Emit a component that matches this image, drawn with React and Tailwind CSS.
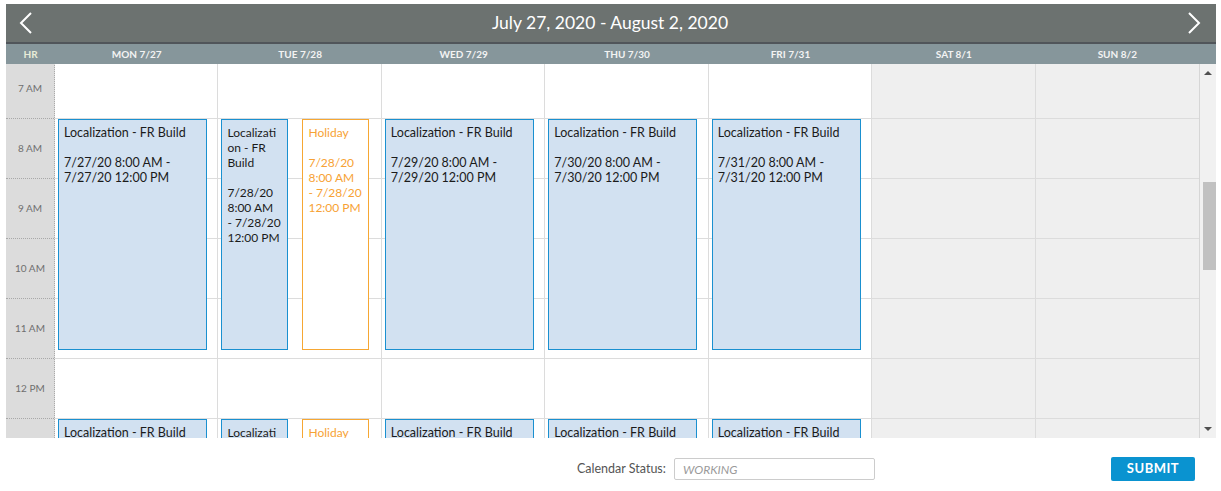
import React from 'react';

const hours = ['7 AM', '8 AM', '9 AM', '10 AM', '11 AM', '12 PM', '1 PM'];

const days = [
  { label: 'MON 7/27', date: '7/27/20', weekend: false },
  { label: 'TUE 7/28', date: '7/28/20', weekend: false, holiday: true },
  { label: 'WED 7/29', date: '7/29/20', weekend: false },
  { label: 'THU 7/30', date: '7/30/20', weekend: false },
  { label: 'FRI 7/31', date: '7/31/20', weekend: false },
  { label: 'SAT 8/1', weekend: true },
  { label: 'SUN 8/2', weekend: true },
];

const blocks = [
  { top: 'top-[61px]', start: '8:00 AM', end: '12:00 PM' },
  { top: 'top-[361px]', start: '1:00 PM', end: '5:00 PM' },
];

function Chevron({ dir }) {
  return (
    <svg width="16" height="24" viewBox="0 0 16 24" fill="none">
      <path
        d={dir === 'left' ? 'M13 2 L3 12 L13 22' : 'M3 2 L13 12 L3 22'}
        stroke="white"
        strokeWidth="2"
      />
    </svg>
  );
}

function Range({ block, date, narrow }) {
  if (narrow) {
    return (
      <div>
        {date} {block.start} <span className="whitespace-nowrap">- {date}</span> {block.end}
      </div>
    );
  }
  return (
    <div>
      {date} {block.start} - {date} {block.end}
    </div>
  );
}

function WorkEvent({ block, date, narrow }) {
  return (
    <div
      className={`absolute ${block.top} left-[3px] ${narrow ? 'w-[67px] text-[12px]' : 'w-[149px] text-[12.5px]'} h-[231px] bg-[#d2e1f1] border border-[#1a90d0] px-[5px] pt-[5px] leading-[15px] text-[#1b1b1b] break-words`}
    >
      <div>Localization - FR Build</div>
      <div className="h-[15px]" />
      <Range block={block} date={date} narrow={narrow} />
    </div>
  );
}

function HolidayEvent({ block, date }) {
  return (
    <div
      className={`absolute ${block.top} left-[84px] w-[67px] h-[231px] bg-white border border-[#f6a733] px-[5px] pt-[5px] text-[12px] leading-[15px] text-[#f7a234] break-words`}
    >
      <div>Holiday</div>
      <div className="h-[15px]" />
      <Range block={block} date={date} narrow />
    </div>
  );
}

export default function App() {
  return (
    <div className="bg-white w-[1221px] h-[491px] px-[6px] pt-[4px] font-['Lato','Liberation_Sans',sans-serif]">
      <div className="w-[1210px]">
        {/* title bar */}
        <div className="h-[40px] bg-[#6c7270] flex items-center justify-between pl-[12px] pr-[14px] border-b-2 border-[#50555a]">
          <Chevron dir="left" />
          <div className="text-white text-[17.5px] leading-none">July 27, 2020 - August 2, 2020</div>
          <Chevron dir="right" />
        </div>

        {/* day headers */}
        <div className="h-[20px] bg-[#86969b] flex text-[10px] font-bold text-[#f3f3f3]">
          <div className="grid grid-cols-[49px_repeat(7,1fr)] w-[1193px] items-center">
            <div className="text-center text-[#e8ecd8]">HR</div>
            {days.map((d) => (
              <div key={d.label} className="text-center">{d.label}</div>
            ))}
          </div>
        </div>

        {/* body */}
        <div className="flex h-[374px] overflow-hidden">
          <div className="w-[1193px] overflow-hidden">
            <div className="grid grid-cols-[49px_repeat(7,1fr)] -mt-[6px]">
              <div className="bg-[#dcdcdc] border-r border-dotted border-[#a9a9a9]">
                {hours.map((h, i) => (
                  <div
                    key={h}
                    className={`h-[60px] flex items-center justify-center text-[10px] text-[#6f6f6f] ${i > 0 ? 'border-t border-dotted border-[#a9a9a9]' : ''}`}
                  >
                    {h}
                  </div>
                ))}
              </div>
              {days.map((d, di) => (
                <div
                  key={d.label}
                  className={`relative ${d.weekend ? 'bg-[#efefef]' : 'bg-white'} ${di < 6 ? 'border-r border-[#dcdcdc]' : ''}`}
                >
                  {hours.map((h, i) => (
                    <div key={h} className={`h-[60px] ${i > 0 ? 'border-t border-[#dcdcdc]' : ''}`} />
                  ))}
                  {!d.weekend &&
                    blocks.map((b) => (
                      <React.Fragment key={b.top}>
                        <WorkEvent block={b} date={d.date} narrow={d.holiday} />
                        {d.holiday && <HolidayEvent block={b} date={d.date} />}
                      </React.Fragment>
                    ))}
                </div>
              ))}
            </div>
          </div>

          {/* scrollbar */}
          <div className="relative w-[17px] bg-[#f1f1f1] border-l border-[#d6d6d6] flex flex-col items-center justify-between py-[7px]">
            <div className="w-0 h-0 border-l-[4px] border-r-[4px] border-b-[4px] border-l-transparent border-r-transparent border-b-[#505050]" />
            <div className="absolute top-[118px] left-[3px] w-[13px] h-[88px] bg-[#c1c1c1]" />
            <div className="w-0 h-0 border-l-[4px] border-r-[4px] border-t-[4px] border-l-transparent border-r-transparent border-t-[#505050]" />
          </div>
        </div>

        {/* footer */}
        <div className="flex items-center h-[62px] pl-[571px] pr-[21px]">
          <span className="text-[12.5px] text-[#555] mr-[8px] whitespace-nowrap">Calendar Status:</span>
          <input
            readOnly
            placeholder="WORKING"
            className="w-[201px] h-[22px] border border-[#cccccc] rounded-[2px] px-[8px] text-[12px] italic placeholder:text-[#9a9a9a] outline-none"
          />
          <button className="ml-auto w-[84px] h-[24px] bg-[#0a93d0] text-white text-[13px] font-bold tracking-[0.5px] rounded-[2px]">
            SUBMIT
          </button>
        </div>
      </div>
    </div>
  );
}
